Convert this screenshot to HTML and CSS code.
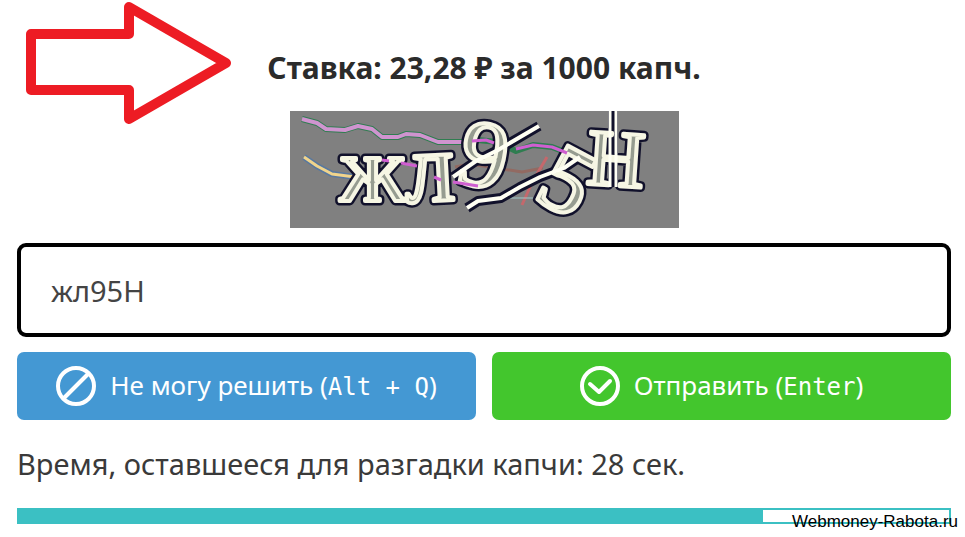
FILE: index.html
```
<!DOCTYPE html>
<html lang="ru">
<head>
<meta charset="utf-8">
<meta name="viewport" content="width=device-width, initial-scale=1">
<title>Разгадка капчи</title>
<link rel="stylesheet" href="styles.css">
</head>
<body>
<svg class="arrow" viewBox="0 0 220 124" aria-hidden="true">
    <path d="M19 32H117V5L214 61L117 117V88H19Z"/>
</svg>

<main class="work">
    <h1 class="rate">Ставка: 23,28 ₽ за 1000 капч.</h1>

    <svg class="captcha" viewBox="0 0 389 117" role="img" aria-label="Капча">
        <rect width="389" height="117" fill="#808080"/>
        <!-- noise lines -->
        <g class="noise">
            <path class="halo-green" d="M12 8L27 12L36 18L55 19L68 15L82 18L92 26L108 26L116 23L130 24L148 31L172 31L188 29L207 31L226 40L243 34L262 36L275 41"/>
            <path class="pink" d="M12 8L27 12L36 18L55 19L68 15L82 18L92 26L108 26L116 23L130 24L148 31L172 31"/>
            <path class="halo-blue" d="M14 46L27 55L42 63L65 66L76 68"/>
            <path class="yellow" d="M14 46L27 55L42 63L65 66L76 68"/>
            <path class="brown" d="M165 56L180 53L206 57L232 61L253 57"/>
            <path class="red" d="M232 94L240 76L247 63L257 46"/>
            <path class="cyan" d="M218 87H243"/>
        </g>
        <path class="ink" d="M163 66L186 50L208 39L249 15"/>
        <path class="ink" d="M177 97L188 90L211 87L230 76L250 66L274 57L290 46"/>
        <path class="ink" d="M323 0V76"/>
        <!-- each letter twice: dark outline, then light edge -->
        <g class="letters outline">
            <text x="50" y="90" font-size="94">ж</text>
            <text x="115" y="90" font-size="100" transform="rotate(-3 145 70)">л</text>
            <text x="170" y="76" font-size="96" transform="rotate(12 194 45)">9</text>
            <text x="252" y="100" font-size="96" transform="rotate(28 274 72)">5</text>
            <text x="297" y="75" font-size="80" transform="rotate(4 327 48)">Н</text>
        </g>
        <g class="letters edge">
            <text x="50" y="90" font-size="94">ж</text>
            <text x="115" y="90" font-size="100" transform="rotate(-3 145 70)">л</text>
            <text x="170" y="76" font-size="96" transform="rotate(12 194 45)">9</text>
            <text x="252" y="100" font-size="96" transform="rotate(28 274 72)">5</text>
            <text x="297" y="75" font-size="80" transform="rotate(4 327 48)">Н</text>
        </g>
        <g class="noise">
            <path class="magenta" d="M92 49L99 50M111 52L127 55M144 66L151 69M163 71L188 75M182 30L196 29L204 32M226 38L243 34L262 36L277 42"/>
        </g>
        <path class="chalk" d="M163 66L186 50L208 39L249 15"/>
        <path class="chalk" d="M177 97L188 90L211 87L230 76L250 66L274 57L290 46"/>
        <path class="chalk thin" d="M320 0V76M326 0V76"/>
    </svg>

    <form class="answer" onsubmit="return false">
        <input class="answer-text" type="text" value="жл95Н" aria-label="Текст с картинки" autocomplete="off" spellcheck="false">
        <div class="buttons">
            <button class="btn btn-skip" type="button">
                <svg class="icon" viewBox="0 0 40 40" aria-hidden="true"><circle cx="20" cy="20" r="18"/><path d="M8 32L32 8"/></svg>
                <span>Не могу решить (<kbd>Alt + Q</kbd>)</span>
            </button>
            <button class="btn btn-send" type="submit">
                <svg class="icon" viewBox="0 0 40 40" aria-hidden="true"><circle cx="20" cy="20" r="18"/><path class="check" d="M10 18L19 26L30 15"/></svg>
                <span>Отправить (<kbd>Enter</kbd>)</span>
            </button>
        </div>
    </form>

    <label class="timer" for="time-left">Время, оставшееся для разгадки капчи: 28 сек.</label>
    <progress class="time-left" id="time-left" max="100" value="80"></progress>
</main>

<div class="watermark">Webmoney-Rabota.ru</div>
</body>
</html>
```

FILE: styles.css
```
* { box-sizing: border-box; }

body { margin: 0; position: relative; background: #fff; color: #3a3a3a; font-family: "Noto Sans", "Open Sans", sans-serif; }

.work { display: flex; flex-direction: column; padding: 48px 14px 12px 17px; }

.rate { margin: 0 0 23px; color: #2b2b2b; font-size: 30px; line-height: 40px; font-weight: 700; text-align: center; }

/* red pointer over the page */
.arrow { position: absolute; left: 12px; top: 2px; width: 220px; height: 124px; fill: none; stroke: #ed1c24; stroke-width: 10; stroke-linejoin: round; }

/* captcha picture */
.captcha { align-self: center; width: 389px; max-width: 100%; margin-bottom: 15px; }
.captcha path { fill: none; stroke-linejoin: round; }
.noise path { stroke-width: 3; }
.noise .halo-green { stroke: #2f7d50; stroke-width: 6; }
.noise .halo-blue { stroke: #5878a0; stroke-width: 6; }
.noise .pink { stroke: #cf94cf; stroke-width: 4; }
.noise .magenta { stroke: #cf5fd0; }
.noise .yellow { stroke: #f0d48c; }
.noise .brown { stroke: #926a62; }
.noise .red { stroke: #c4686c; }
.noise .cyan { stroke: #a0c8c8; stroke-width: 1; }
.captcha .ink { stroke: #11112b; stroke-width: 10; }
.captcha .chalk { stroke: #fffff4; stroke-width: 4; }
.captcha .thin { stroke-width: 3; }
.letters { font-family: "Liberation Serif", serif; font-weight: 400; stroke-linejoin: round; }
.outline { fill: #11112b; stroke: #11112b; stroke-width: 9; }
.edge { fill: #969c90; stroke: #f6f6e4; stroke-width: 4; }

/* answer form */
.answer-text { display: block; width: 100%; height: 94px; padding: 0 30px; border: 4px solid #000; border-radius: 9px; outline: none; background: #fff; color: #444; font: inherit; font-size: 29px; }
.buttons { display: grid; grid-template-columns: 1fr 1fr; gap: 16px; margin-top: 15px; }
.btn { display: flex; align-items: center; justify-content: center; gap: 14px; height: 68px; padding: 0 12px; border: 0; border-radius: 7px; color: #fff; font: inherit; font-size: 26px; line-height: 36px; white-space: nowrap; cursor: pointer; }
.btn-skip { background: #4498d3; }
.btn-send { background: #43c62d; }
.btn kbd { font-family: "DejaVu Sans Mono", monospace; font-size: 24px; }
.icon { flex: none; width: 40px; height: 40px; fill: none; stroke: #fff; stroke-width: 4; }
.icon .check { stroke-linecap: round; stroke-linejoin: round; }

/* countdown */
.timer { margin-top: 24px; font-size: 29px; line-height: 40px; }
.time-left { appearance: none; -webkit-appearance: none; display: block; width: 100%; height: 16px; margin-top: 24px; border: 2px solid #3bc0c3; background: #fff; }
.time-left::-webkit-progress-bar { background: #fff; }
.time-left::-webkit-progress-value { background: #3bc0c3; }
.time-left::-moz-progress-bar { background: #3bc0c3; }

.watermark { position: absolute; right: 7px; bottom: 4px; color: #000; font-family: "Liberation Sans", Arial, sans-serif; font-size: 17px; line-height: 20px; }
```
